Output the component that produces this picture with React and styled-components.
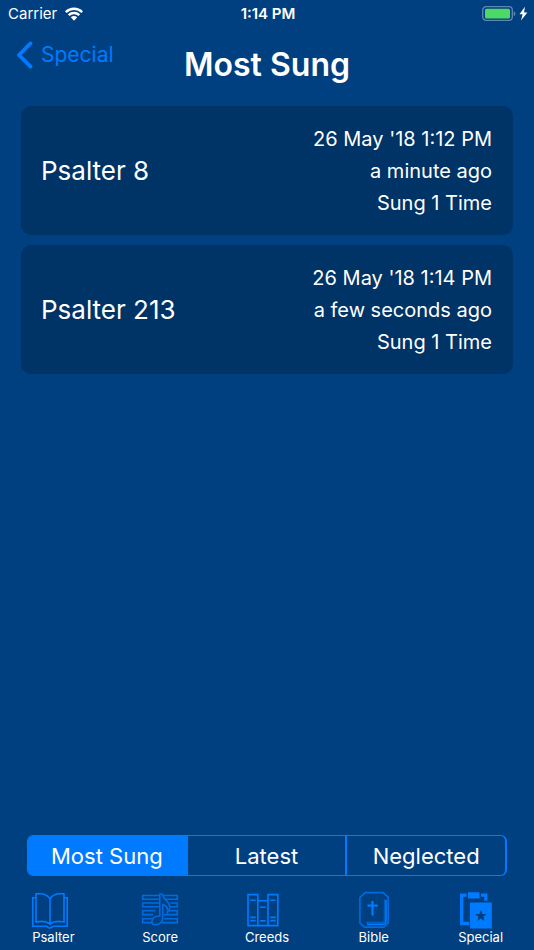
import React, { useState } from "react";
import styled, { createGlobalStyle, ThemeProvider } from "styled-components";

const theme = {
  background: "#004080",
  card: "#003366",
  accent: "#007aff",
  text: "#ffffff",
  battery: "#4cd964",
};

const GlobalStyle = createGlobalStyle`
  *, *::before, *::after { box-sizing: border-box; }
  body {
    margin: 0;
    background: ${theme.background};
    color: ${theme.text};
    font-family: Inter, "Liberation Sans", sans-serif;
  }
  button { font: inherit; color: inherit; }
`;

const Screen = styled.div`
  display: flex;
  flex-direction: column;
  min-height: 100vh;
`;

const StatusBar = styled.div`
  display: grid;
  grid-template-columns: 1fr auto 1fr;
  align-items: center;
  height: 28px;
  padding: 0 6px 0 8px;
  font-size: 15px;
  line-height: 20px;
`;

const Carrier = styled.div`
  display: flex;
  align-items: center;
  gap: 8px;
`;

const Clock = styled.time`
  font-weight: 600;
`;

const Power = styled.div`
  display: flex;
  justify-content: flex-end;
`;

const Header = styled.header`
  display: grid;
  grid-template-columns: 1fr auto 1fr;
  align-items: start;
  padding: 8px 16px 16px;
`;

const BackButton = styled.button`
  display: flex;
  align-items: center;
  justify-self: start;
  gap: 8px;
  padding: 4px 0;
  border: 0;
  background: none;
  color: ${(p) => p.theme.accent};
  font-size: 21px;
  line-height: 30px;
  cursor: pointer;
`;

const Title = styled.h1`
  margin: 8px 0 0;
  font-size: 32px;
  font-weight: 600;
  line-height: 42px;
`;

const List = styled.ul`
  display: flex;
  flex: 1;
  flex-direction: column;
  gap: 10px;
  margin: 0;
  padding: 4px 21px 20px;
  list-style: none;
`;

const Card = styled.li`
  display: flex;
  align-items: center;
  justify-content: space-between;
  padding: 17px 21px 16px 20px;
  border-radius: 10px;
  background: ${(p) => p.theme.card};
`;

const CardName = styled.span`
  font-size: 26px;
  line-height: 32px;
`;

const CardDetails = styled.div`
  font-size: 20px;
  line-height: 32px;
  text-align: right;
`;

const Segments = styled.div`
  display: flex;
  height: 41px;
  margin: 0 27px;
  overflow: hidden;
  border: 1px solid ${(p) => p.theme.accent};
  border-right-width: 2px;
  border-radius: 6px;
`;

const Segment = styled.button`
  flex: 1;
  padding: 0;
  border: 0;
  background: ${(p) => (p.$selected ? p.theme.accent : "transparent")};
  font-size: 22px;
  line-height: 30px;
  cursor: pointer;

  & + & { border-left: 2px solid ${(p) => p.theme.accent}; }
`;

const TabBar = styled.nav`
  display: grid;
  grid-template-columns: repeat(5, 1fr);
  padding: 14px 0 6px;
`;

const Tab = styled.a`
  display: flex;
  flex-direction: column;
  justify-self: center;
  align-items: flex-start;
  color: ${(p) => p.theme.text};
  font-size: 13px;
  line-height: 14px;
  text-decoration: none;
`;

const TabIcon = styled.svg`
  display: block;
  width: 36px;
  height: 40px;
  overflow: visible;
  margin-right: ${(p) => (p.$narrow ? "-6px" : "0")};
  fill: none;
  stroke: ${(p) => p.theme.accent};
  stroke-width: 1.6;
`;

function WifiIcon() {
  return (
    <svg width="18" height="14" viewBox="0 0 18 14" fill="none" stroke="#fff" strokeWidth="2.4" aria-hidden="true">
      <path d="M.8 5.1a11.7 11.7 0 0 1 16.4 0M3.7 8.2a7.6 7.6 0 0 1 10.6 0" />
      <path d="M5.8 10.3a4.6 4.6 0 0 1 6.4 0L9 13.7z" fill="#fff" stroke="none" />
    </svg>
  );
}

function BatteryIcon() {
  return (
    <svg width="46" height="16" viewBox="0 0 46 16" role="img" aria-label="Battery charging">
      <rect x=".7" y=".7" width="29.6" height="13.6" rx="3.4" fill="none" stroke="#5f88b0" strokeWidth="1.3" />
      <rect x="3" y="2.8" width="25" height="9.6" rx="1.5" fill={theme.battery} />
      <path d="M31.7 5.2c2.2.7 2.2 4.3 0 5z" fill="#5f88b0" />
      <path d="M42.9.8 37.5 8.2h3.1L39 14.4l6.4-8h-3.3z" fill="#fff" />
    </svg>
  );
}

function BackChevron() {
  return (
    <svg width="17" height="28" viewBox="0 0 17 28" fill="none" stroke={theme.accent} strokeWidth="3.8" strokeLinecap="round" strokeLinejoin="round" aria-hidden="true">
      <path d="M14.5 2.4 3 14l11.5 11.6" />
    </svg>
  );
}

function PsalterIcon() {
  return (
    <TabIcon viewBox="0 0 36 40" aria-hidden="true">
      <path d="M18 9v25C14.4 31.2 9.4 30.9 4 32V3.9C9.9 3.2 15.6 4.4 18 9ZM18 9c2.4-4.6 8.1-5.8 14-5.1V32c-5.4-1.1-10.4-.8-14 2" />
      <path d="M4 7.8H.8v28.4h13.6c1.1 0 1.2 1.8 3.6 1.8s2.5-1.8 3.6-1.8h13.6V7.8H32" />
    </TabIcon>
  );
}

function ScoreIcon() {
  return (
    <TabIcon viewBox="0 0 36 40" aria-hidden="true" opacity=".75">
      <path d="M17.5 5.5H.7v3.8h16.8M22 5.5h13.3v3.8H24M17.5 13H.7v3.8h16.8M28.5 13h6.8v3.8h-6.8M13.5 20.8H.7v3.8h10.2M26 20.8h9.3v3.8H22M10 28.8H.7v3.8h9.8M22 28.8h13.3v3.8H20" />
      <path d="M17.8 4.2h2.8c.2 5.8 7.3 6.7 7.3 12.9 0 2.5-1.1 4.1-2.4 5.6.7-5-1.1-7.5-4.7-8.1v13.2c0 4.3-3.4 7-7.1 7-2.4 0-3.8-1.5-3.8-3.4 0-3.3 3.2-5.7 7.9-5.4z" />
    </TabIcon>
  );
}

function CreedsIcon() {
  return (
    <TabIcon viewBox="0 0 36 40" aria-hidden="true">
      <path d="M3 4.6h9.8v31H3zM12.8 10.8H23v24.8H12.8zM23 4.6h9.8v31H23z" />
      <path d="M5.3 10.2h5.4M15.2 17.2h5.4M25.3 10.2h5.4M5.3 27.4h5.4M5.3 30.6h5.4M15.2 30.9h5.4M25.3 27.4h5.4M25.3 30.6h5.4" />
    </TabIcon>
  );
}

function BibleIcon() {
  return (
    <TabIcon viewBox="0 0 36 40" $narrow aria-hidden="true">
      <path d="M6.3 2.6h17.6l5.3 4.6v25.6l-4.4 4.3H5.3L.9 32.8V7.4z" opacity=".75" />
      <path d="M25.6 9.6v20c0 1.8-1 2.8-2.8 2.8H7" opacity=".5" />
      <path d="M27 10v20.4c0 2.7-1.3 4-4 4H8" />
      <path d="M13.5 11v14.5M8.5 15.7h10.2" strokeWidth="2.3" />
    </TabIcon>
  );
}

function SpecialIcon() {
  return (
    <TabIcon viewBox="0 0 36 40" aria-hidden="true">
      <path d="M8.5 5.2H3.7v28.3h7.5M23 5.2h4.8v5.5" strokeWidth="3.3" />
      <path d="M10 2.2h11.5v6.3H10zM12 12.4h21.8v26H12z" fill={theme.accent} stroke="none" />
      <path d="m22.9 20 1.5 4h4.3l-3.4 2.7 1.2 4.2-3.6-2.5-3.6 2.5 1.2-4.2-3.4-2.7h4.3z" fill={theme.background} stroke="none" />
    </TabIcon>
  );
}

const songs = [
  { name: "Psalter 8", date: "26 May '18 1:12 PM", ago: "a minute ago", count: "Sung 1 Time" },
  { name: "Psalter 213", date: "26 May '18 1:14 PM", ago: "a few seconds ago", count: "Sung 1 Time" },
];

const views = ["Most Sung", "Latest", "Neglected"];

const tabs = [
  { label: "Psalter", Icon: PsalterIcon },
  { label: "Score", Icon: ScoreIcon },
  { label: "Creeds", Icon: CreedsIcon },
  { label: "Bible", Icon: BibleIcon },
  { label: "Special", Icon: SpecialIcon },
];

export default function App() {
  const [view, setView] = useState("Most Sung");

  return (
    <ThemeProvider theme={theme}>
      <GlobalStyle />
      <Screen>
        <StatusBar>
          <Carrier>Carrier <WifiIcon /></Carrier>
          <Clock>1:14 PM</Clock>
          <Power><BatteryIcon /></Power>
        </StatusBar>
        <Header>
          <BackButton type="button"><BackChevron />Special</BackButton>
          <Title>{view}</Title>
        </Header>
        <List>
          {songs.map((song) => (
            <Card key={song.name}>
              <CardName>{song.name}</CardName>
              <CardDetails>
                <div>{song.date}</div>
                <div>{song.ago}</div>
                <div>{song.count}</div>
              </CardDetails>
            </Card>
          ))}
        </List>
        <Segments role="group" aria-label="View">
          {views.map((name) => (
            <Segment key={name} type="button" $selected={name === view} aria-pressed={name === view} onClick={() => setView(name)}>
              {name}
            </Segment>
          ))}
        </Segments>
        <TabBar aria-label="Sections">
          {tabs.map(({ label, Icon }) => (
            <Tab key={label} href={`#${label.toLowerCase()}`} aria-current={label === "Special" ? "page" : undefined}>
              <Icon />
              {label}
            </Tab>
          ))}
        </TabBar>
      </Screen>
    </ThemeProvider>
  );
}
